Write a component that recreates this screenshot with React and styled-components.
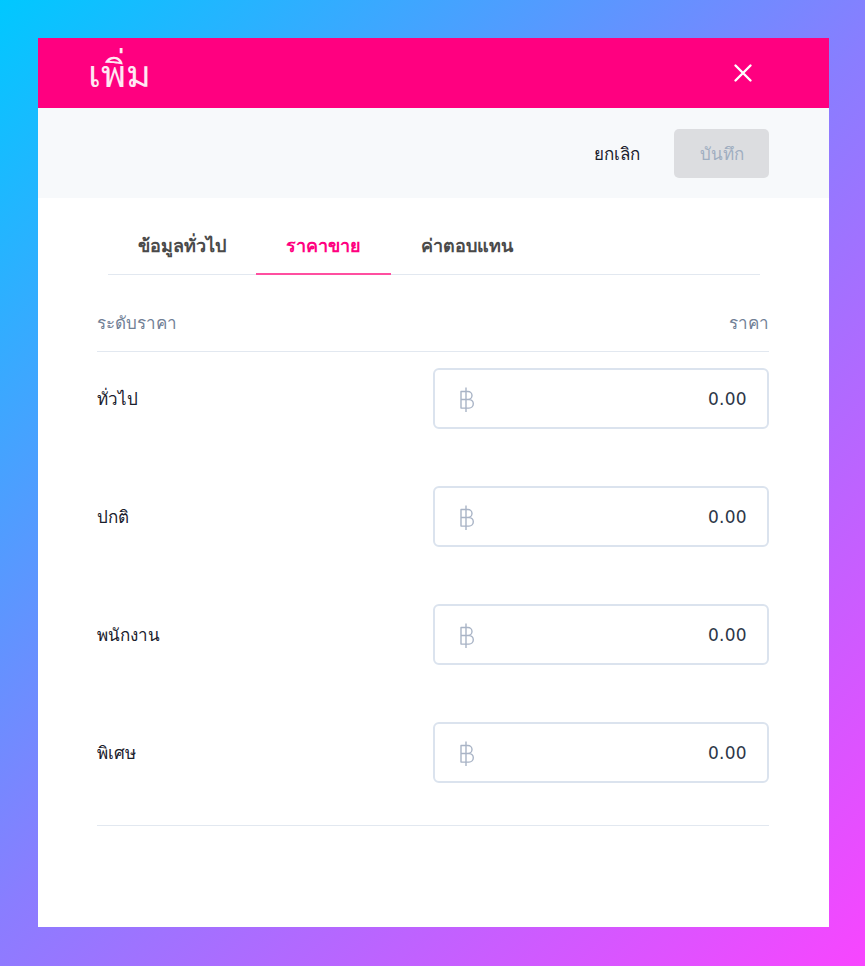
import React, { useState } from "react";
import styled, { createGlobalStyle } from "styled-components";

const GlobalStyle = createGlobalStyle`
  html, body {
    margin: 0;
    padding: 0;
  }
  body {
    font-family: "Liberation Sans", "Noto Sans", sans-serif;
  }
`;

const Page = styled.div`
  width: 100%;
  min-height: 966px;
  box-sizing: border-box;
  padding: 38px 36px 39px 38px;
  background: linear-gradient(135deg, #00c8ff 0%, #8a7dff 50%, #f845ff 100%);
  display: flex;
`;

const Modal = styled.div`
  width: 791px;
  height: 889px;
  background: #ffffff;
  display: flex;
  flex-direction: column;
`;

const Header = styled.div`
  height: 70px;
  background: #ff0080;
  display: flex;
  align-items: center;
  justify-content: space-between;
  padding: 0 74px 0 50px;
  box-sizing: border-box;
`;

const Title = styled.h1`
  margin: 0;
  color: #ffe8f3;
  font-family: serif;
  font-size: 38px;
  font-weight: 400;
`;

const CloseButton = styled.button`
  border: none;
  background: none;
  padding: 0;
  width: 24px;
  height: 24px;
  display: flex;
  align-items: center;
  justify-content: center;
  cursor: pointer;
`;

const Toolbar = styled.div`
  height: 90px;
  background: #f7f9fb;
  display: flex;
  align-items: center;
  justify-content: flex-end;
  gap: 34px;
  padding: 0 60px;
  box-sizing: border-box;
`;

const TextButton = styled.button`
  border: none;
  background: none;
  font-family: inherit;
  font-size: 17px;
  color: #1a202c;
  padding: 0;
`;

const SaveButton = styled.button`
  width: 95px;
  height: 49px;
  border: none;
  border-radius: 5px;
  background: #dcdde0;
  color: #a0aec0;
  font-family: inherit;
  font-size: 17px;
`;

const Body = styled.div`
  padding: 20px 60px 0 59px;
  display: flex;
  flex-direction: column;
`;

const TabBar = styled.div`
  margin: 0 9px 0 11px;
  display: flex;
  border-bottom: 1px solid #e2e8f0;
`;

const TabItem = styled.button`
  border: none;
  background: none;
  font-family: inherit;
  font-size: 18px;
  font-weight: 700;
  height: 57px;
  padding: 0 30px;
  margin-bottom: -1px;
  color: ${(p) => (p.active ? "#ff0080" : "#4a4a4a")};
  border-bottom: 2px solid ${(p) => (p.active ? "#ff4fa0" : "transparent")};
  cursor: pointer;
`;

const TableHead = styled.div`
  display: flex;
  justify-content: space-between;
  align-items: center;
  height: 77px;
  padding-top: 18px;
  box-sizing: border-box;
  border-bottom: 1px solid #e2e8f0;
  color: #718096;
  font-size: 17px;
`;

const Rows = styled.div`
  display: flex;
  flex-direction: column;
  padding: 16px 0 42px;
  gap: 57px;
  border-bottom: 1px solid #e2e8f0;
`;

const Row = styled.div`
  display: flex;
  align-items: center;
  justify-content: space-between;
  height: 61px;
`;

const Label = styled.span`
  font-size: 17px;
  color: #1a202c;
`;

const PriceInput = styled.div`
  width: 336px;
  height: 61px;
  box-sizing: border-box;
  border: 2px solid #dbe3ee;
  border-radius: 6px;
  display: flex;
  align-items: center;
  justify-content: space-between;
  padding: 0 20px 0 23px;
`;

const Value = styled.span`
  font-family: "DejaVu Sans", sans-serif;
  font-size: 17px;
  color: #2d3748;
  letter-spacing: 0.3px;
`;

const BahtIcon = () => (
  <svg width="18" height="28" viewBox="0 0 18 28" aria-hidden="true">
    <path
      d="M3 6.5 H10 a4 4 0 0 1 0 8 H3 Z M3 14.5 H11 a4.3 4.3 0 0 1 0 8.6 H3 Z M8 2.5 V27"
      fill="none"
      stroke="#a9b4c6"
      strokeWidth="1.4"
      strokeLinejoin="round"
    />
  </svg>
);

const tabs = ["ข้อมูลทั่วไป", "ราคาขาย", "ค่าตอบแทน"];
const levels = ["ทั่วไป", "ปกติ", "พนักงาน", "พิเศษ"];

export default function App() {
  const [active, setActive] = useState(1);

  return (
    <>
      <GlobalStyle />
      <Page>
        <Modal>
          <Header>
            <Title>เพิ่ม</Title>
            <CloseButton aria-label="close">
              <svg width="20" height="20" viewBox="0 0 20 20">
                <path
                  d="M2.5 2.5 L17.5 17.5 M17.5 2.5 L2.5 17.5"
                  stroke="#ffffff"
                  strokeWidth="2.4"
                  strokeLinecap="round"
                />
              </svg>
            </CloseButton>
          </Header>
          <Toolbar>
            <TextButton>ยกเลิก</TextButton>
            <SaveButton disabled>บันทึก</SaveButton>
          </Toolbar>
          <Body>
            <TabBar>
              {tabs.map((t, i) => (
                <TabItem key={t} active={i === active} onClick={() => setActive(i)}>
                  {t}
                </TabItem>
              ))}
            </TabBar>
            <TableHead>
              <span>ระดับราคา</span>
              <span>ราคา</span>
            </TableHead>
            <Rows>
              {levels.map((l) => (
                <Row key={l}>
                  <Label>{l}</Label>
                  <PriceInput>
                    <BahtIcon />
                    <Value>0.00</Value>
                  </PriceInput>
                </Row>
              ))}
            </Rows>
          </Body>
        </Modal>
      </Page>
    </>
  );
}
